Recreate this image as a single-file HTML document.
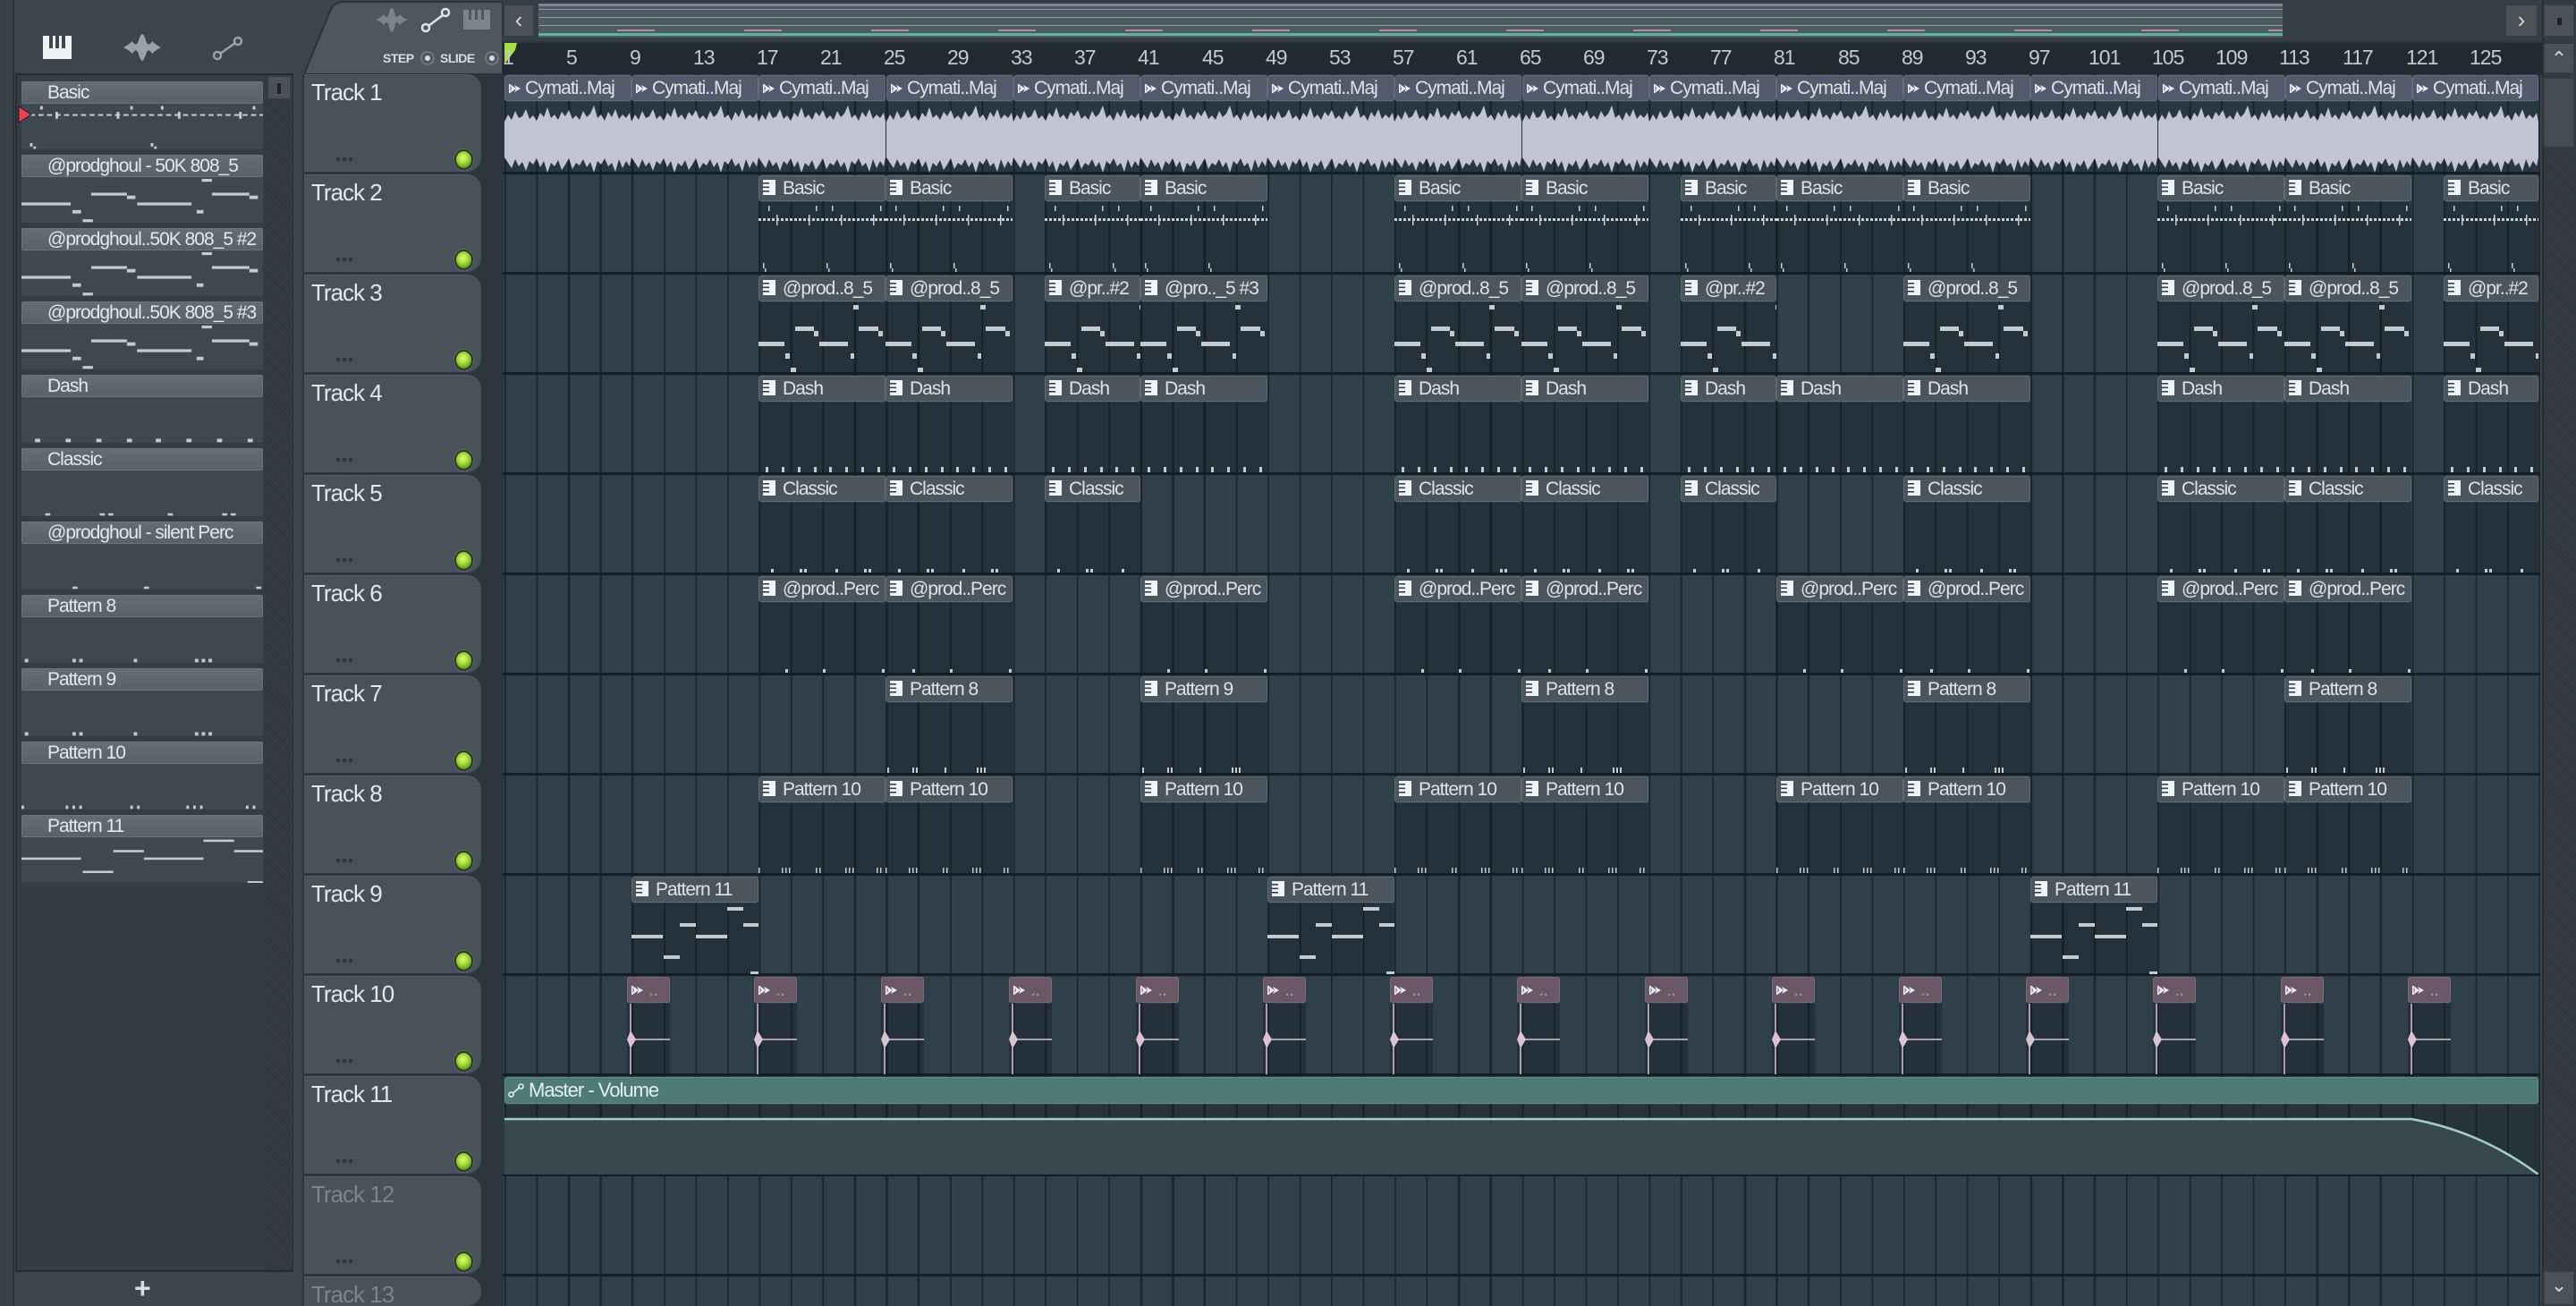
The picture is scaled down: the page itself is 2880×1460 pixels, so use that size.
<!DOCTYPE html>
<html style="width:2880px;height:1460px;overflow:hidden"><head><meta charset="utf-8">
<style>
*{box-sizing:border-box;margin:0;padding:0}
body{width:2880px;height:1460px;overflow:hidden;background:#3d454c;font-family:"Liberation Sans Narrow","Liberation Sans",sans-serif;position:relative}
.a{position:absolute}
#lp{left:0;top:0;width:334px;height:1460px;background:#3e464d}
#lstrip{left:0;top:0;width:16px;height:1460px;background:#394046;border-right:2px solid #2b3238}
#list{left:17px;top:82px;width:311px;height:1340px;background:#333d45;border:2px solid #252d33}
#lscroll{left:296px;top:84px;width:31px;height:1336px;background:repeating-linear-gradient(45deg,#30373d 0 2px,#363d43 2px 4px)}
.it{position:absolute;left:24px;width:270px;height:76px;background:#3e4850}
.it .ih{height:25px;background:linear-gradient(#636d75,#58626a);border:1px solid #6a747b;border-radius:2px;color:#e3e9ed;font-size:21px;letter-spacing:-1px;line-height:23px;padding-left:28px;white-space:nowrap;overflow:hidden;position:relative}
.it svg{position:absolute;left:0;top:25px;width:270px;height:51px}
.pi{position:absolute;left:4px;top:4px;width:14px;height:17px}
#tab{left:340px;top:0;width:222px;height:83px}
#ov{left:562px;top:0;width:2280px;height:46px;background:#363e44}
#ruler{left:562px;top:46px;width:2280px;height:37px;background:#1f2a31;border-top:2px solid #2b353c}
.rn{position:absolute;top:3px;color:#c2cad0;font-size:23px;letter-spacing:-1px;margin-left:-4px}
#th{left:338px;top:83px;width:224px;height:1377px;background:#2c363d;overflow:hidden}
.tr{position:absolute;left:2px;width:198px;height:109px;background:#4a5259;border-radius:0 16px 16px 0;border-top:1px solid #555d64}
.tr b{position:absolute;left:8px;top:4px;font-weight:normal;color:#e3e8eb;font-size:26px;letter-spacing:-1px}
.tr b.d{color:#7b848a}
.tr i{position:absolute;left:36px;top:92px;width:20px;height:4px;background:repeating-linear-gradient(90deg,#2f373d 0 4px,transparent 4px 7px)}
.led{position:absolute;left:168px;top:83px;width:21px;height:23px;border-radius:50%;background:radial-gradient(circle at 45% 40%,#d8ff80 0,#a8e23c 35%,#5c9218 80%);border:2px solid #2a3a20;box-shadow:0 0 0 1px #5d666c}
#grid{left:562px;top:83px;width:2278px;height:1377px;background-color:#30404a;background-image:repeating-linear-gradient(to right,#1a252c 0 2px,transparent 2px 35.54px);background-position:2px 0;overflow:hidden}
.sep{position:absolute;left:0;width:2278px;height:3px;background:#151e24}
.c{position:absolute;height:109px}
.c .h{height:29px;background:#4b555e;border:1px solid #5f6a72;border-radius:3px;color:#dde4e8;font-size:21px;letter-spacing:-1px;line-height:27px;padding-left:26px;white-space:nowrap;overflow:hidden;position:relative}
.c svg.b{position:absolute;left:0;top:30px;height:79px;background:rgba(15,22,28,.32)}
.w .h{background:#525a6c;border-color:#636b7d;padding-left:22px}
.w svg.b{background:rgba(15,22,28,.2)}
.k .h{background:#6b5866;border-color:#7d6a77;padding-left:4px;color:#a8949f}
.fi{position:absolute;left:4px;top:8px;width:14px;height:12px}
#vs{left:2842px;top:0;width:38px;height:1460px;background:repeating-linear-gradient(45deg,#30373d 0 2px,#363d43 2px 4px);border-left:2px solid #262d32}
.btn{position:absolute;background:#4a5258;border:2px solid #353c42;color:#d0d6da;text-align:center}
</style></head><body>
<svg width="0" height="0" style="position:absolute">
<defs>
<symbol id="pic" viewBox="0 0 14 17"><rect width="14" height="17" fill="#f2f5f7"/><rect x="0" y="3" width="7" height="1.6" fill="#33404a"/><rect x="0" y="7.5" width="7" height="1.6" fill="#33404a"/><rect x="0" y="12" width="7" height="1.6" fill="#33404a"/></symbol>
<pattern id="dots" width="5" height="3" patternUnits="userSpaceOnUse"><rect width="3" height="3" fill="#c8cfd4"/></pattern>
<symbol id="sB" viewBox="0 0 142 79"><rect x="0" y="18" width="142" height="3" fill="url(#dots)"/><rect x="11" y="4" width="1.5" height="6" fill="#c8cfd4"/><rect x="64" y="4" width="1.5" height="6" fill="#c8cfd4"/><rect x="82" y="4" width="1.5" height="6" fill="#c8cfd4"/><rect x="136" y="4" width="1.5" height="6" fill="#c8cfd4"/><rect x="20" y="14" width="1.5" height="12" fill="#c8cfd4"/><rect x="56" y="14" width="1.5" height="12" fill="#c8cfd4"/><rect x="92" y="14" width="1.5" height="12" fill="#c8cfd4"/><rect x="128" y="14" width="1.5" height="12" fill="#c8cfd4"/><rect x="5" y="68" width="1.5" height="6" fill="#c8cfd4"/><rect x="76" y="68" width="1.5" height="6" fill="#c8cfd4"/><rect x="7" y="74" width="1.5" height="4" fill="#c8cfd4"/><rect x="78" y="74" width="1.5" height="4" fill="#c8cfd4"/></symbol>
<symbol id="s8" viewBox="0 0 142 79" fill="#c3cbd0"><rect x="0" y="44" width="29" height="5"/><rect x="41" y="27" width="21" height="5"/><rect x="62" y="32" width="5" height="6"/><rect x="30" y="57" width="5" height="6"/><rect x="36" y="73" width="6" height="5"/><rect x="68" y="44" width="32" height="5"/><rect x="103" y="57" width="4" height="6"/><rect x="106" y="3" width="6" height="5"/><rect x="112" y="27" width="22" height="5"/><rect x="134" y="32" width="5" height="6"/></symbol>
<symbol id="sD" viewBox="0 0 142 79" fill="#c3cbd0"><rect x="8" y="72" width="3" height="6"/><rect x="26" y="72" width="3" height="6"/><rect x="44" y="72" width="3" height="6"/><rect x="62" y="72" width="3" height="6"/><rect x="79" y="72" width="3" height="6"/><rect x="97" y="72" width="3" height="6"/><rect x="115" y="72" width="3" height="6"/><rect x="133" y="72" width="3" height="6"/></symbol>
<symbol id="sC" viewBox="0 0 142 79" fill="#c3cbd0"><rect x="14" y="74" width="3" height="4"/><rect x="46" y="74" width="3" height="4"/><rect x="51" y="74" width="3" height="4"/><rect x="86" y="74" width="3" height="4"/><rect x="118" y="74" width="3" height="4"/><rect x="123" y="74" width="3" height="4"/></symbol>
<symbol id="sP" viewBox="0 0 142 79" fill="#c3cbd0"><rect x="30" y="74" width="3" height="4"/><rect x="72" y="74" width="3" height="4"/><rect x="138" y="74" width="3" height="4"/></symbol>
<symbol id="s9" viewBox="0 0 142 79" fill="#c3cbd0"><rect x="2" y="72" width="2" height="6"/><rect x="30" y="72" width="2" height="6"/><rect x="34" y="72" width="2" height="6"/><rect x="66" y="72" width="2" height="6"/><rect x="102" y="72" width="2" height="6"/><rect x="106" y="72" width="2" height="6"/><rect x="110" y="72" width="2" height="6"/></symbol>
<symbol id="sT" viewBox="0 0 142 79" fill="#c3cbd0"><rect x="0" y="72" width="1.5" height="6"/><rect x="26" y="72" width="1.5" height="6"/><rect x="30" y="72" width="1.5" height="6"/><rect x="34" y="72" width="1.5" height="6"/><rect x="64" y="72" width="1.5" height="6"/><rect x="68" y="72" width="1.5" height="6"/><rect x="97" y="72" width="1.5" height="6"/><rect x="101" y="72" width="1.5" height="6"/><rect x="105" y="72" width="1.5" height="6"/><rect x="132" y="72" width="1.5" height="6"/><rect x="136" y="72" width="1.5" height="6"/></symbol>
<symbol id="s11" viewBox="0 0 142 79" fill="#c3cbd0"><rect x="0" y="35" width="35" height="4"/><rect x="36" y="58" width="18" height="4"/><rect x="54" y="22" width="18" height="4"/><rect x="72" y="35" width="35" height="4"/><rect x="107" y="4" width="18" height="4"/><rect x="125" y="22" width="17" height="4"/><rect x="133" y="76" width="9" height="3"/></symbol>
<symbol id="sW" viewBox="0 0 142 79"><polygon fill="#c0c4d4" points="0,22 4,14 8,20 12,10 16,18 20,16 24,8 28,19 32,15 36,21 40,12 44,17 48,6 52,18 56,14 60,20 64,11 68,16 72,9 76,19 80,15 84,20 88,10 92,17 96,13 100,4 104,18 108,14 112,21 116,11 120,17 124,8 128,19 132,14 136,18 140,12 142,22 142,62 140,72 136,66 132,74 128,64 124,78 120,68 116,72 112,63 108,70 104,66 100,79 96,67 92,73 88,64 84,71 80,68 76,75 72,63 68,70 64,76 60,65 56,72 52,68 48,79 44,66 40,73 36,63 32,70 28,66 24,77 20,67 16,72 12,64 8,74 4,68 0,62"/></symbol>
<symbol id="sK" viewBox="0 0 48 79"><rect x="0" y="0" width="48" height="79" fill="rgba(15,22,28,.35)"/><line x1="4" y1="0" x2="4" y2="79" stroke="#dcc3d3" stroke-width="1.5"/><polygon points="4,30 10,40 4,50 0,40" fill="#dcc3d3"/><line x1="4" y1="40" x2="48" y2="40" stroke="#dcc3d3" stroke-width="1.5"/></symbol>
<symbol id="fic" viewBox="0 0 14 12"><rect x="0" y="1" width="1.6" height="10" fill="#eef"/><polygon points="1,1 8,6 1,11 3,6" fill="#eef"/><polygon points="6,2 13,6 6,10 8,6" fill="#eef"/></symbol>
</defs></svg>

<div class="a" id="lp"></div>
<div class="a" id="lstrip"></div>
<svg class="a" style="left:48px;top:40px" width="32" height="26" viewBox="0 0 32 26"><rect width="32" height="26" fill="#eef2f4"/><rect x="7" y="0" width="4" height="14" fill="#3e464d"/><rect x="14" y="0" width="4" height="14" fill="#3e464d"/><rect x="21" y="0" width="4" height="14" fill="#3e464d"/></svg>
<svg class="a" style="left:138px;top:38px" width="42" height="30" viewBox="0 0 42 30"><path d="M0 15 Q6 12 10 8 Q13 14 16 10 Q19 0 21 0 Q23 0 26 10 Q29 14 32 8 Q36 12 42 15 Q36 18 32 22 Q29 16 26 20 Q23 30 21 30 Q19 30 16 20 Q13 16 10 22 Q6 18 0 15Z" fill="#9aa2a8"/></svg>
<svg class="a" style="left:238px;top:40px" width="34" height="28" viewBox="0 0 34 28"><circle cx="5" cy="22" r="4" fill="none" stroke="#9aa2a8" stroke-width="2.5"/><circle cx="28" cy="6" r="4" fill="none" stroke="#9aa2a8" stroke-width="2.5"/><line x1="8" y1="20" x2="25" y2="8" stroke="#9aa2a8" stroke-width="2.5"/></svg>

<div class="a" id="list"></div>
<div class="a" id="lscroll"></div>
<div class="btn" style="left:298px;top:84px;width:28px;height:28px"><div style="position:absolute;left:10px;top:7px;width:4px;height:12px;background:#1d2328"></div></div>

<div class="it" style="top:91px"><div class="ih"><svg class="pi"><use href="#pic"/></svg>Basic</div><svg viewBox="0 0 142 79" preserveAspectRatio="none"><use href="#sB"/></svg></div>
<svg class="a" style="left:20px;top:118px" width="16" height="20" viewBox="0 0 16 20"><polygon points="1,1 15,10 1,19" fill="#e8405a" stroke="#30101a" stroke-width="1"/></svg>
<div class="it" style="top:173px"><div class="ih"><svg class="pi"><use href="#pic"/></svg>@prodghoul - 50K 808_5</div><svg viewBox="0 0 142 79" preserveAspectRatio="none"><use href="#s8"/></svg></div>
<div class="it" style="top:255px"><div class="ih"><svg class="pi"><use href="#pic"/></svg>@prodghoul..50K 808_5 #2</div><svg viewBox="0 0 142 79" preserveAspectRatio="none"><use href="#s8"/></svg></div>
<div class="it" style="top:337px"><div class="ih"><svg class="pi"><use href="#pic"/></svg>@prodghoul..50K 808_5 #3</div><svg viewBox="0 0 142 79" preserveAspectRatio="none"><use href="#s8"/></svg></div>
<div class="it" style="top:419px"><div class="ih"><svg class="pi"><use href="#pic"/></svg>Dash</div><svg viewBox="0 0 142 79" preserveAspectRatio="none"><use href="#sD"/></svg></div>
<div class="it" style="top:501px"><div class="ih"><svg class="pi"><use href="#pic"/></svg>Classic</div><svg viewBox="0 0 142 79" preserveAspectRatio="none"><use href="#sC"/></svg></div>
<div class="it" style="top:583px"><div class="ih"><svg class="pi"><use href="#pic"/></svg>@prodghoul - silent Perc</div><svg viewBox="0 0 142 79" preserveAspectRatio="none"><use href="#sP"/></svg></div>
<div class="it" style="top:665px"><div class="ih"><svg class="pi"><use href="#pic"/></svg>Pattern 8</div><svg viewBox="0 0 142 79" preserveAspectRatio="none"><use href="#s9"/></svg></div>
<div class="it" style="top:747px"><div class="ih"><svg class="pi"><use href="#pic"/></svg>Pattern 9</div><svg viewBox="0 0 142 79" preserveAspectRatio="none"><use href="#s9"/></svg></div>
<div class="it" style="top:829px"><div class="ih"><svg class="pi"><use href="#pic"/></svg>Pattern 10</div><svg viewBox="0 0 142 79" preserveAspectRatio="none"><use href="#sT"/></svg></div>
<div class="it" style="top:911px"><div class="ih"><svg class="pi"><use href="#pic"/></svg>Pattern 11</div><svg viewBox="0 0 142 79" preserveAspectRatio="none"><use href="#s11"/></svg></div>
<div class="a" style="left:150px;top:1422px;color:#d8dde0;font-size:32px;font-family:'Liberation Sans',sans-serif;font-weight:bold">+</div>

<svg class="a" id="tab" width="222" height="83" viewBox="0 0 222 83"><path d="M0 83 L30 10 Q35 2 44 2 L222 2 L222 83Z" fill="#4f575e" stroke="#2c3338" stroke-width="2"/>
<path d="M80 22 Q86 20 89 16 Q92 21 94 18 Q96 9 98 9 Q100 9 102 18 Q104 21 107 16 Q110 20 116 22 Q110 24 107 28 Q104 23 102 26 Q100 36 98 36 Q96 36 94 26 Q92 23 89 28 Q86 24 80 22Z" fill="#7b848a"/>
<circle cx="136" cy="31" r="4" fill="none" stroke="#dfe4e7" stroke-width="2.5"/><circle cx="158" cy="14" r="4" fill="none" stroke="#dfe4e7" stroke-width="2.5"/><line x1="139" y1="29" x2="155" y2="17" stroke="#dfe4e7" stroke-width="2.5"/>
<rect x="178" y="11" width="30" height="22" fill="#7b848a"/><rect x="184" y="11" width="3" height="11" fill="#4f575e"/><rect x="191" y="11" width="3" height="11" fill="#4f575e"/><rect x="198" y="11" width="3" height="11" fill="#4f575e"/>
<text x="88" y="70" font-size="14" fill="#d6dce0" font-family="Liberation Sans Narrow, Liberation Sans, sans-serif" font-weight="bold" letter-spacing="-0.5">STEP</text><circle cx="138" cy="65" r="7" fill="none" stroke="#6f787e" stroke-width="2"/><circle cx="138" cy="65" r="3" fill="#d6dce0"/>
<text x="152" y="70" font-size="14" fill="#d6dce0" font-family="Liberation Sans Narrow, Liberation Sans, sans-serif" font-weight="bold" letter-spacing="-0.5">SLIDE</text><circle cx="210" cy="65" r="7" fill="none" stroke="#6f787e" stroke-width="2"/><circle cx="210" cy="65" r="3" fill="#d6dce0"/></svg>

<div class="a" id="ov"></div>
<div class="btn" style="left:562px;top:4px;width:36px;height:38px;font-size:26px;line-height:32px">&#8249;</div>
<div class="a" style="left:602px;top:4px;width:1950px;height:38px;background:#4f5d63;background-image:repeating-linear-gradient(to bottom,transparent 0 6px,#8e9a9f 6px 7px,transparent 7px 9px);background-size:100% 28px;background-repeat:no-repeat"></div>
<div class="a" style="left:602px;top:4px;width:1950px;height:3px;background:#7d86a0"></div>
<div class="a" style="left:602px;top:33px;width:1950px;height:2px;background:repeating-linear-gradient(90deg,transparent 0 88px,#b5899e 88px 130px,transparent 130px 142px)"></div>
<div class="a" style="left:602px;top:37px;width:1950px;height:3px;background:#5fb0a6"></div>
<div class="btn" style="left:2800px;top:4px;width:38px;height:38px;font-size:26px;line-height:32px">&#8250;</div>

<div class="a" id="ruler">
<svg class="a" style="left:0;top:0" width="16" height="26" viewBox="0 0 16 26"><polygon points="2,0 16,0 14,8 2,24" fill="#a5e040"/></svg>
<span class="rn" style="left:4px">1</span><span class="rn" style="left:75px">5</span><span class="rn" style="left:146px">9</span><span class="rn" style="left:217px">13</span><span class="rn" style="left:288px">17</span><span class="rn" style="left:359px">21</span><span class="rn" style="left:430px">25</span><span class="rn" style="left:501px">29</span><span class="rn" style="left:572px">33</span><span class="rn" style="left:643px">37</span><span class="rn" style="left:714px">41</span><span class="rn" style="left:786px">45</span><span class="rn" style="left:857px">49</span><span class="rn" style="left:928px">53</span><span class="rn" style="left:999px">57</span><span class="rn" style="left:1070px">61</span><span class="rn" style="left:1141px">65</span><span class="rn" style="left:1212px">69</span><span class="rn" style="left:1283px">73</span><span class="rn" style="left:1354px">77</span><span class="rn" style="left:1425px">81</span><span class="rn" style="left:1497px">85</span><span class="rn" style="left:1568px">89</span><span class="rn" style="left:1639px">93</span><span class="rn" style="left:1710px">97</span><span class="rn" style="left:1777px">101</span><span class="rn" style="left:1848px">105</span><span class="rn" style="left:1919px">109</span><span class="rn" style="left:1990px">113</span><span class="rn" style="left:2061px">117</span><span class="rn" style="left:2132px">121</span><span class="rn" style="left:2203px">125</span>
</div>

<div class="a" id="th">
<div class="tr" style="top:0"><b>Track 1</b><i></i><div class="led"></div></div>
<div class="tr" style="top:112px"><b>Track 2</b><i></i><div class="led"></div></div>
<div class="tr" style="top:224px"><b>Track 3</b><i></i><div class="led"></div></div>
<div class="tr" style="top:336px"><b>Track 4</b><i></i><div class="led"></div></div>
<div class="tr" style="top:448px"><b>Track 5</b><i></i><div class="led"></div></div>
<div class="tr" style="top:560px"><b>Track 6</b><i></i><div class="led"></div></div>
<div class="tr" style="top:672px"><b>Track 7</b><i></i><div class="led"></div></div>
<div class="tr" style="top:784px"><b>Track 8</b><i></i><div class="led"></div></div>
<div class="tr" style="top:896px"><b>Track 9</b><i></i><div class="led"></div></div>
<div class="tr" style="top:1008px"><b>Track 10</b><i></i><div class="led"></div></div>
<div class="tr" style="top:1120px"><b>Track 11</b><i></i><div class="led"></div></div>
<div class="tr" style="top:1232px"><b class="d">Track 12</b><i></i><div class="led"></div></div>
<div class="tr" style="top:1344px;height:33px"><b class="d">Track 13</b></div>
</div>

<div class="a" id="grid">
<div class="sep" style="top:109px"></div><div class="sep" style="top:221px"></div><div class="sep" style="top:333px"></div><div class="sep" style="top:445px"></div><div class="sep" style="top:557px"></div><div class="sep" style="top:669px"></div><div class="sep" style="top:781px"></div><div class="sep" style="top:893px"></div><div class="sep" style="top:1005px"></div><div class="sep" style="top:1117px"></div><div class="sep" style="top:1229px"></div><div class="sep" style="top:1341px"></div>

<div class="c w" style="left:2px;top:1px;width:142px"><div class="h"><svg class="fi"><use href="#fic"/></svg>Cymati..Maj</div><svg class="b" width="142" viewBox="0 0 142 79"><use href="#sW"/></svg></div>
<div class="c w" style="left:144px;top:1px;width:142px"><div class="h"><svg class="fi"><use href="#fic"/></svg>Cymati..Maj</div><svg class="b" width="142" viewBox="0 0 142 79"><use href="#sW"/></svg></div>
<div class="c w" style="left:286px;top:1px;width:142px"><div class="h"><svg class="fi"><use href="#fic"/></svg>Cymati..Maj</div><svg class="b" width="142" viewBox="0 0 142 79"><use href="#sW"/></svg></div>
<div class="c w" style="left:429px;top:1px;width:142px"><div class="h"><svg class="fi"><use href="#fic"/></svg>Cymati..Maj</div><svg class="b" width="142" viewBox="0 0 142 79"><use href="#sW"/></svg></div>
<div class="c w" style="left:571px;top:1px;width:142px"><div class="h"><svg class="fi"><use href="#fic"/></svg>Cymati..Maj</div><svg class="b" width="142" viewBox="0 0 142 79"><use href="#sW"/></svg></div>
<div class="c w" style="left:713px;top:1px;width:142px"><div class="h"><svg class="fi"><use href="#fic"/></svg>Cymati..Maj</div><svg class="b" width="142" viewBox="0 0 142 79"><use href="#sW"/></svg></div>
<div class="c w" style="left:855px;top:1px;width:142px"><div class="h"><svg class="fi"><use href="#fic"/></svg>Cymati..Maj</div><svg class="b" width="142" viewBox="0 0 142 79"><use href="#sW"/></svg></div>
<div class="c w" style="left:997px;top:1px;width:142px"><div class="h"><svg class="fi"><use href="#fic"/></svg>Cymati..Maj</div><svg class="b" width="142" viewBox="0 0 142 79"><use href="#sW"/></svg></div>
<div class="c w" style="left:1140px;top:1px;width:142px"><div class="h"><svg class="fi"><use href="#fic"/></svg>Cymati..Maj</div><svg class="b" width="142" viewBox="0 0 142 79"><use href="#sW"/></svg></div>
<div class="c w" style="left:1282px;top:1px;width:142px"><div class="h"><svg class="fi"><use href="#fic"/></svg>Cymati..Maj</div><svg class="b" width="142" viewBox="0 0 142 79"><use href="#sW"/></svg></div>
<div class="c w" style="left:1424px;top:1px;width:142px"><div class="h"><svg class="fi"><use href="#fic"/></svg>Cymati..Maj</div><svg class="b" width="142" viewBox="0 0 142 79"><use href="#sW"/></svg></div>
<div class="c w" style="left:1566px;top:1px;width:142px"><div class="h"><svg class="fi"><use href="#fic"/></svg>Cymati..Maj</div><svg class="b" width="142" viewBox="0 0 142 79"><use href="#sW"/></svg></div>
<div class="c w" style="left:1708px;top:1px;width:142px"><div class="h"><svg class="fi"><use href="#fic"/></svg>Cymati..Maj</div><svg class="b" width="142" viewBox="0 0 142 79"><use href="#sW"/></svg></div>
<div class="c w" style="left:1851px;top:1px;width:142px"><div class="h"><svg class="fi"><use href="#fic"/></svg>Cymati..Maj</div><svg class="b" width="142" viewBox="0 0 142 79"><use href="#sW"/></svg></div>
<div class="c w" style="left:1993px;top:1px;width:142px"><div class="h"><svg class="fi"><use href="#fic"/></svg>Cymati..Maj</div><svg class="b" width="142" viewBox="0 0 142 79"><use href="#sW"/></svg></div>
<div class="c w" style="left:2135px;top:1px;width:141px"><div class="h"><svg class="fi"><use href="#fic"/></svg>Cymati..Maj</div><svg class="b" width="141" viewBox="0 0 142 79"><use href="#sW"/></svg></div>

<div class="c" style="left:286px;top:113px;width:142px"><div class="h"><svg class="pi"><use href="#pic"/></svg>Basic</div><svg class="b" width="142" viewBox="0 0 142 79"><use href="#sB"/></svg></div>
<div class="c" style="left:428px;top:113px;width:142px"><div class="h"><svg class="pi"><use href="#pic"/></svg>Basic</div><svg class="b" width="142" viewBox="0 0 142 79"><use href="#sB"/></svg></div>
<div class="c" style="left:606px;top:113px;width:107px"><div class="h"><svg class="pi"><use href="#pic"/></svg>Basic</div><svg class="b" width="107" viewBox="0 0 107 79"><use href="#sB" width="142" height="79"/></svg></div>
<div class="c" style="left:713px;top:113px;width:142px"><div class="h"><svg class="pi"><use href="#pic"/></svg>Basic</div><svg class="b" width="142" viewBox="0 0 142 79"><use href="#sB"/></svg></div>
<div class="c" style="left:997px;top:113px;width:142px"><div class="h"><svg class="pi"><use href="#pic"/></svg>Basic</div><svg class="b" width="142" viewBox="0 0 142 79"><use href="#sB"/></svg></div>
<div class="c" style="left:1139px;top:113px;width:142px"><div class="h"><svg class="pi"><use href="#pic"/></svg>Basic</div><svg class="b" width="142" viewBox="0 0 142 79"><use href="#sB"/></svg></div>
<div class="c" style="left:1317px;top:113px;width:107px"><div class="h"><svg class="pi"><use href="#pic"/></svg>Basic</div><svg class="b" width="107" viewBox="0 0 107 79"><use href="#sB" width="142" height="79"/></svg></div>
<div class="c" style="left:1424px;top:113px;width:142px"><div class="h"><svg class="pi"><use href="#pic"/></svg>Basic</div><svg class="b" width="142" viewBox="0 0 142 79"><use href="#sB"/></svg></div>
<div class="c" style="left:1566px;top:113px;width:142px"><div class="h"><svg class="pi"><use href="#pic"/></svg>Basic</div><svg class="b" width="142" viewBox="0 0 142 79"><use href="#sB"/></svg></div>
<div class="c" style="left:1850px;top:113px;width:142px"><div class="h"><svg class="pi"><use href="#pic"/></svg>Basic</div><svg class="b" width="142" viewBox="0 0 142 79"><use href="#sB"/></svg></div>
<div class="c" style="left:1992px;top:113px;width:142px"><div class="h"><svg class="pi"><use href="#pic"/></svg>Basic</div><svg class="b" width="142" viewBox="0 0 142 79"><use href="#sB"/></svg></div>
<div class="c" style="left:2170px;top:113px;width:106px"><div class="h"><svg class="pi"><use href="#pic"/></svg>Basic</div><svg class="b" width="106" viewBox="0 0 106 79"><use href="#sB" width="142" height="79"/></svg></div>

<div class="c" style="left:286px;top:225px;width:142px"><div class="h"><svg class="pi"><use href="#pic"/></svg>@prod..8_5</div><svg class="b" width="142" viewBox="0 0 142 79"><use href="#s8"/></svg></div>
<div class="c" style="left:428px;top:225px;width:142px"><div class="h"><svg class="pi"><use href="#pic"/></svg>@prod..8_5</div><svg class="b" width="142" viewBox="0 0 142 79"><use href="#s8"/></svg></div>
<div class="c" style="left:606px;top:225px;width:107px"><div class="h"><svg class="pi"><use href="#pic"/></svg>@pr..#2</div><svg class="b" width="107" viewBox="0 0 107 79"><use href="#s8" width="142" height="79"/></svg></div>
<div class="c" style="left:713px;top:225px;width:142px"><div class="h"><svg class="pi"><use href="#pic"/></svg>@pro.._5 #3</div><svg class="b" width="142" viewBox="0 0 142 79"><use href="#s8"/></svg></div>
<div class="c" style="left:997px;top:225px;width:142px"><div class="h"><svg class="pi"><use href="#pic"/></svg>@prod..8_5</div><svg class="b" width="142" viewBox="0 0 142 79"><use href="#s8"/></svg></div>
<div class="c" style="left:1139px;top:225px;width:142px"><div class="h"><svg class="pi"><use href="#pic"/></svg>@prod..8_5</div><svg class="b" width="142" viewBox="0 0 142 79"><use href="#s8"/></svg></div>
<div class="c" style="left:1317px;top:225px;width:107px"><div class="h"><svg class="pi"><use href="#pic"/></svg>@pr..#2</div><svg class="b" width="107" viewBox="0 0 107 79"><use href="#s8" width="142" height="79"/></svg></div>
<div class="c" style="left:1566px;top:225px;width:142px"><div class="h"><svg class="pi"><use href="#pic"/></svg>@prod..8_5</div><svg class="b" width="142" viewBox="0 0 142 79"><use href="#s8"/></svg></div>
<div class="c" style="left:1850px;top:225px;width:142px"><div class="h"><svg class="pi"><use href="#pic"/></svg>@prod..8_5</div><svg class="b" width="142" viewBox="0 0 142 79"><use href="#s8"/></svg></div>
<div class="c" style="left:1992px;top:225px;width:142px"><div class="h"><svg class="pi"><use href="#pic"/></svg>@prod..8_5</div><svg class="b" width="142" viewBox="0 0 142 79"><use href="#s8"/></svg></div>
<div class="c" style="left:2170px;top:225px;width:106px"><div class="h"><svg class="pi"><use href="#pic"/></svg>@pr..#2</div><svg class="b" width="106" viewBox="0 0 106 79"><use href="#s8" width="142" height="79"/></svg></div>

<div class="c" style="left:286px;top:337px;width:142px"><div class="h"><svg class="pi"><use href="#pic"/></svg>Dash</div><svg class="b" width="142" viewBox="0 0 142 79"><use href="#sD"/></svg></div>
<div class="c" style="left:428px;top:337px;width:142px"><div class="h"><svg class="pi"><use href="#pic"/></svg>Dash</div><svg class="b" width="142" viewBox="0 0 142 79"><use href="#sD"/></svg></div>
<div class="c" style="left:606px;top:337px;width:107px"><div class="h"><svg class="pi"><use href="#pic"/></svg>Dash</div><svg class="b" width="107" viewBox="0 0 107 79"><use href="#sD" width="142" height="79"/></svg></div>
<div class="c" style="left:713px;top:337px;width:142px"><div class="h"><svg class="pi"><use href="#pic"/></svg>Dash</div><svg class="b" width="142" viewBox="0 0 142 79"><use href="#sD"/></svg></div>
<div class="c" style="left:997px;top:337px;width:142px"><div class="h"><svg class="pi"><use href="#pic"/></svg>Dash</div><svg class="b" width="142" viewBox="0 0 142 79"><use href="#sD"/></svg></div>
<div class="c" style="left:1139px;top:337px;width:142px"><div class="h"><svg class="pi"><use href="#pic"/></svg>Dash</div><svg class="b" width="142" viewBox="0 0 142 79"><use href="#sD"/></svg></div>
<div class="c" style="left:1317px;top:337px;width:107px"><div class="h"><svg class="pi"><use href="#pic"/></svg>Dash</div><svg class="b" width="107" viewBox="0 0 107 79"><use href="#sD" width="142" height="79"/></svg></div>
<div class="c" style="left:1424px;top:337px;width:142px"><div class="h"><svg class="pi"><use href="#pic"/></svg>Dash</div><svg class="b" width="142" viewBox="0 0 142 79"><use href="#sD"/></svg></div>
<div class="c" style="left:1566px;top:337px;width:142px"><div class="h"><svg class="pi"><use href="#pic"/></svg>Dash</div><svg class="b" width="142" viewBox="0 0 142 79"><use href="#sD"/></svg></div>
<div class="c" style="left:1850px;top:337px;width:142px"><div class="h"><svg class="pi"><use href="#pic"/></svg>Dash</div><svg class="b" width="142" viewBox="0 0 142 79"><use href="#sD"/></svg></div>
<div class="c" style="left:1992px;top:337px;width:142px"><div class="h"><svg class="pi"><use href="#pic"/></svg>Dash</div><svg class="b" width="142" viewBox="0 0 142 79"><use href="#sD"/></svg></div>
<div class="c" style="left:2170px;top:337px;width:106px"><div class="h"><svg class="pi"><use href="#pic"/></svg>Dash</div><svg class="b" width="106" viewBox="0 0 106 79"><use href="#sD" width="142" height="79"/></svg></div>

<div class="c" style="left:286px;top:449px;width:142px"><div class="h"><svg class="pi"><use href="#pic"/></svg>Classic</div><svg class="b" width="142" viewBox="0 0 142 79"><use href="#sC"/></svg></div>
<div class="c" style="left:428px;top:449px;width:142px"><div class="h"><svg class="pi"><use href="#pic"/></svg>Classic</div><svg class="b" width="142" viewBox="0 0 142 79"><use href="#sC"/></svg></div>
<div class="c" style="left:606px;top:449px;width:107px"><div class="h"><svg class="pi"><use href="#pic"/></svg>Classic</div><svg class="b" width="107" viewBox="0 0 107 79"><use href="#sC" width="142" height="79"/></svg></div>
<div class="c" style="left:997px;top:449px;width:142px"><div class="h"><svg class="pi"><use href="#pic"/></svg>Classic</div><svg class="b" width="142" viewBox="0 0 142 79"><use href="#sC"/></svg></div>
<div class="c" style="left:1139px;top:449px;width:142px"><div class="h"><svg class="pi"><use href="#pic"/></svg>Classic</div><svg class="b" width="142" viewBox="0 0 142 79"><use href="#sC"/></svg></div>
<div class="c" style="left:1317px;top:449px;width:107px"><div class="h"><svg class="pi"><use href="#pic"/></svg>Classic</div><svg class="b" width="107" viewBox="0 0 107 79"><use href="#sC" width="142" height="79"/></svg></div>
<div class="c" style="left:1566px;top:449px;width:142px"><div class="h"><svg class="pi"><use href="#pic"/></svg>Classic</div><svg class="b" width="142" viewBox="0 0 142 79"><use href="#sC"/></svg></div>
<div class="c" style="left:1850px;top:449px;width:142px"><div class="h"><svg class="pi"><use href="#pic"/></svg>Classic</div><svg class="b" width="142" viewBox="0 0 142 79"><use href="#sC"/></svg></div>
<div class="c" style="left:1992px;top:449px;width:142px"><div class="h"><svg class="pi"><use href="#pic"/></svg>Classic</div><svg class="b" width="142" viewBox="0 0 142 79"><use href="#sC"/></svg></div>
<div class="c" style="left:2170px;top:449px;width:106px"><div class="h"><svg class="pi"><use href="#pic"/></svg>Classic</div><svg class="b" width="106" viewBox="0 0 106 79"><use href="#sC" width="142" height="79"/></svg></div>

<div class="c" style="left:286px;top:561px;width:142px"><div class="h"><svg class="pi"><use href="#pic"/></svg>@prod..Perc</div><svg class="b" width="142" viewBox="0 0 142 79"><use href="#sP"/></svg></div>
<div class="c" style="left:428px;top:561px;width:142px"><div class="h"><svg class="pi"><use href="#pic"/></svg>@prod..Perc</div><svg class="b" width="142" viewBox="0 0 142 79"><use href="#sP"/></svg></div>
<div class="c" style="left:713px;top:561px;width:142px"><div class="h"><svg class="pi"><use href="#pic"/></svg>@prod..Perc</div><svg class="b" width="142" viewBox="0 0 142 79"><use href="#sP"/></svg></div>
<div class="c" style="left:997px;top:561px;width:142px"><div class="h"><svg class="pi"><use href="#pic"/></svg>@prod..Perc</div><svg class="b" width="142" viewBox="0 0 142 79"><use href="#sP"/></svg></div>
<div class="c" style="left:1139px;top:561px;width:142px"><div class="h"><svg class="pi"><use href="#pic"/></svg>@prod..Perc</div><svg class="b" width="142" viewBox="0 0 142 79"><use href="#sP"/></svg></div>
<div class="c" style="left:1424px;top:561px;width:142px"><div class="h"><svg class="pi"><use href="#pic"/></svg>@prod..Perc</div><svg class="b" width="142" viewBox="0 0 142 79"><use href="#sP"/></svg></div>
<div class="c" style="left:1566px;top:561px;width:142px"><div class="h"><svg class="pi"><use href="#pic"/></svg>@prod..Perc</div><svg class="b" width="142" viewBox="0 0 142 79"><use href="#sP"/></svg></div>
<div class="c" style="left:1850px;top:561px;width:142px"><div class="h"><svg class="pi"><use href="#pic"/></svg>@prod..Perc</div><svg class="b" width="142" viewBox="0 0 142 79"><use href="#sP"/></svg></div>
<div class="c" style="left:1992px;top:561px;width:142px"><div class="h"><svg class="pi"><use href="#pic"/></svg>@prod..Perc</div><svg class="b" width="142" viewBox="0 0 142 79"><use href="#sP"/></svg></div>

<div class="c" style="left:428px;top:673px;width:142px"><div class="h"><svg class="pi"><use href="#pic"/></svg>Pattern 8</div><svg class="b" width="142" viewBox="0 0 142 79"><use href="#s9"/></svg></div>
<div class="c" style="left:713px;top:673px;width:142px"><div class="h"><svg class="pi"><use href="#pic"/></svg>Pattern 9</div><svg class="b" width="142" viewBox="0 0 142 79"><use href="#s9"/></svg></div>
<div class="c" style="left:1139px;top:673px;width:142px"><div class="h"><svg class="pi"><use href="#pic"/></svg>Pattern 8</div><svg class="b" width="142" viewBox="0 0 142 79"><use href="#s9"/></svg></div>
<div class="c" style="left:1566px;top:673px;width:142px"><div class="h"><svg class="pi"><use href="#pic"/></svg>Pattern 8</div><svg class="b" width="142" viewBox="0 0 142 79"><use href="#s9"/></svg></div>
<div class="c" style="left:1992px;top:673px;width:142px"><div class="h"><svg class="pi"><use href="#pic"/></svg>Pattern 8</div><svg class="b" width="142" viewBox="0 0 142 79"><use href="#s9"/></svg></div>

<div class="c" style="left:286px;top:785px;width:142px"><div class="h"><svg class="pi"><use href="#pic"/></svg>Pattern 10</div><svg class="b" width="142" viewBox="0 0 142 79"><use href="#sT"/></svg></div>
<div class="c" style="left:428px;top:785px;width:142px"><div class="h"><svg class="pi"><use href="#pic"/></svg>Pattern 10</div><svg class="b" width="142" viewBox="0 0 142 79"><use href="#sT"/></svg></div>
<div class="c" style="left:713px;top:785px;width:142px"><div class="h"><svg class="pi"><use href="#pic"/></svg>Pattern 10</div><svg class="b" width="142" viewBox="0 0 142 79"><use href="#sT"/></svg></div>
<div class="c" style="left:997px;top:785px;width:142px"><div class="h"><svg class="pi"><use href="#pic"/></svg>Pattern 10</div><svg class="b" width="142" viewBox="0 0 142 79"><use href="#sT"/></svg></div>
<div class="c" style="left:1139px;top:785px;width:142px"><div class="h"><svg class="pi"><use href="#pic"/></svg>Pattern 10</div><svg class="b" width="142" viewBox="0 0 142 79"><use href="#sT"/></svg></div>
<div class="c" style="left:1424px;top:785px;width:142px"><div class="h"><svg class="pi"><use href="#pic"/></svg>Pattern 10</div><svg class="b" width="142" viewBox="0 0 142 79"><use href="#sT"/></svg></div>
<div class="c" style="left:1566px;top:785px;width:142px"><div class="h"><svg class="pi"><use href="#pic"/></svg>Pattern 10</div><svg class="b" width="142" viewBox="0 0 142 79"><use href="#sT"/></svg></div>
<div class="c" style="left:1850px;top:785px;width:142px"><div class="h"><svg class="pi"><use href="#pic"/></svg>Pattern 10</div><svg class="b" width="142" viewBox="0 0 142 79"><use href="#sT"/></svg></div>
<div class="c" style="left:1992px;top:785px;width:142px"><div class="h"><svg class="pi"><use href="#pic"/></svg>Pattern 10</div><svg class="b" width="142" viewBox="0 0 142 79"><use href="#sT"/></svg></div>

<div class="c" style="left:144px;top:897px;width:142px"><div class="h"><svg class="pi"><use href="#pic"/></svg>Pattern 11</div><svg class="b" width="142" viewBox="0 0 142 79"><use href="#s11"/></svg></div>
<div class="c" style="left:855px;top:897px;width:142px"><div class="h"><svg class="pi"><use href="#pic"/></svg>Pattern 11</div><svg class="b" width="142" viewBox="0 0 142 79"><use href="#s11"/></svg></div>
<div class="c" style="left:1708px;top:897px;width:142px"><div class="h"><svg class="pi"><use href="#pic"/></svg>Pattern 11</div><svg class="b" width="142" viewBox="0 0 142 79"><use href="#s11"/></svg></div>

<div class="c k" style="left:139px;top:1009px;width:48px"><div class="h"><svg class="fi"><use href="#fic"/></svg>&nbsp;&nbsp;&nbsp;&nbsp;..</div><svg class="b" width="48" viewBox="0 0 48 79" style="background:none"><use href="#sK"/></svg></div>
<div class="c k" style="left:281px;top:1009px;width:48px"><div class="h"><svg class="fi"><use href="#fic"/></svg>&nbsp;&nbsp;&nbsp;&nbsp;..</div><svg class="b" width="48" viewBox="0 0 48 79" style="background:none"><use href="#sK"/></svg></div>
<div class="c k" style="left:423px;top:1009px;width:48px"><div class="h"><svg class="fi"><use href="#fic"/></svg>&nbsp;&nbsp;&nbsp;&nbsp;..</div><svg class="b" width="48" viewBox="0 0 48 79" style="background:none"><use href="#sK"/></svg></div>
<div class="c k" style="left:566px;top:1009px;width:48px"><div class="h"><svg class="fi"><use href="#fic"/></svg>&nbsp;&nbsp;&nbsp;&nbsp;..</div><svg class="b" width="48" viewBox="0 0 48 79" style="background:none"><use href="#sK"/></svg></div>
<div class="c k" style="left:708px;top:1009px;width:48px"><div class="h"><svg class="fi"><use href="#fic"/></svg>&nbsp;&nbsp;&nbsp;&nbsp;..</div><svg class="b" width="48" viewBox="0 0 48 79" style="background:none"><use href="#sK"/></svg></div>
<div class="c k" style="left:850px;top:1009px;width:48px"><div class="h"><svg class="fi"><use href="#fic"/></svg>&nbsp;&nbsp;&nbsp;&nbsp;..</div><svg class="b" width="48" viewBox="0 0 48 79" style="background:none"><use href="#sK"/></svg></div>
<div class="c k" style="left:992px;top:1009px;width:48px"><div class="h"><svg class="fi"><use href="#fic"/></svg>&nbsp;&nbsp;&nbsp;&nbsp;..</div><svg class="b" width="48" viewBox="0 0 48 79" style="background:none"><use href="#sK"/></svg></div>
<div class="c k" style="left:1134px;top:1009px;width:48px"><div class="h"><svg class="fi"><use href="#fic"/></svg>&nbsp;&nbsp;&nbsp;&nbsp;..</div><svg class="b" width="48" viewBox="0 0 48 79" style="background:none"><use href="#sK"/></svg></div>
<div class="c k" style="left:1277px;top:1009px;width:48px"><div class="h"><svg class="fi"><use href="#fic"/></svg>&nbsp;&nbsp;&nbsp;&nbsp;..</div><svg class="b" width="48" viewBox="0 0 48 79" style="background:none"><use href="#sK"/></svg></div>
<div class="c k" style="left:1419px;top:1009px;width:48px"><div class="h"><svg class="fi"><use href="#fic"/></svg>&nbsp;&nbsp;&nbsp;&nbsp;..</div><svg class="b" width="48" viewBox="0 0 48 79" style="background:none"><use href="#sK"/></svg></div>
<div class="c k" style="left:1561px;top:1009px;width:48px"><div class="h"><svg class="fi"><use href="#fic"/></svg>&nbsp;&nbsp;&nbsp;&nbsp;..</div><svg class="b" width="48" viewBox="0 0 48 79" style="background:none"><use href="#sK"/></svg></div>
<div class="c k" style="left:1703px;top:1009px;width:48px"><div class="h"><svg class="fi"><use href="#fic"/></svg>&nbsp;&nbsp;&nbsp;&nbsp;..</div><svg class="b" width="48" viewBox="0 0 48 79" style="background:none"><use href="#sK"/></svg></div>
<div class="c k" style="left:1845px;top:1009px;width:48px"><div class="h"><svg class="fi"><use href="#fic"/></svg>&nbsp;&nbsp;&nbsp;&nbsp;..</div><svg class="b" width="48" viewBox="0 0 48 79" style="background:none"><use href="#sK"/></svg></div>
<div class="c k" style="left:1988px;top:1009px;width:48px"><div class="h"><svg class="fi"><use href="#fic"/></svg>&nbsp;&nbsp;&nbsp;&nbsp;..</div><svg class="b" width="48" viewBox="0 0 48 79" style="background:none"><use href="#sK"/></svg></div>
<div class="c k" style="left:2130px;top:1009px;width:48px"><div class="h"><svg class="fi"><use href="#fic"/></svg>&nbsp;&nbsp;&nbsp;&nbsp;..</div><svg class="b" width="48" viewBox="0 0 48 79" style="background:none"><use href="#sK"/></svg></div>

<div class="a" style="left:2px;top:1121px;width:2274px;height:30px;background:#4e7a78;border:1px solid #5f8b88;border-radius:3px;color:#e6f0ef;font-size:22px;letter-spacing:-1px;line-height:28px;padding-left:26px">Master - Volume</div>
<svg class="a" style="left:6px;top:1128px" width="18" height="16" viewBox="0 0 18 16"><circle cx="3.5" cy="12.5" r="2.5" fill="none" stroke="#e6f0ef" stroke-width="1.6"/><circle cx="14.5" cy="3.5" r="2.5" fill="none" stroke="#e6f0ef" stroke-width="1.6"/><line x1="5.5" y1="11" x2="12.5" y2="5" stroke="#e6f0ef" stroke-width="1.6"/></svg>
<svg class="a" style="left:2px;top:1152px" width="2274" height="78" viewBox="0 0 2274 78"><rect width="2274" height="78" fill="rgba(15,22,28,.3)"/><path d="M0 16 L2132 16 Q2210 30 2274 78 L0 78Z" fill="#3b4a52" fill-opacity=".9"/><path d="M0 16 L2132 16 Q2210 30 2274 78" fill="none" stroke="#a2cfcb" stroke-width="2.5"/></svg>
</div>

<div class="a" id="vs"></div>
<div class="btn" style="left:2843px;top:4px;width:36px;height:38px"><div style="position:absolute;left:14px;top:14px;width:5px;height:8px;background:#1d2328"></div></div>
<div class="btn" style="left:2843px;top:47px;width:36px;height:36px;font-size:22px;line-height:34px">&#8963;</div>
<div class="btn" style="left:2843px;top:86px;width:36px;height:80px;background:#454d53"></div>
<div class="btn" style="left:2843px;top:1420px;width:36px;height:40px;font-size:22px;line-height:30px">&#8964;</div>
</body></html>
